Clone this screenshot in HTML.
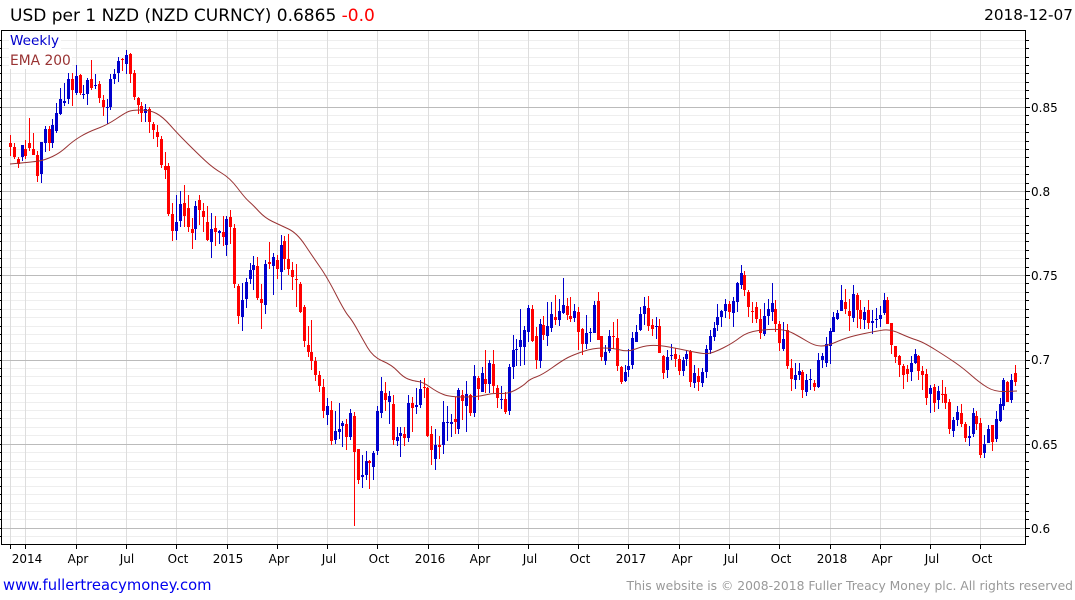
<!DOCTYPE html>
<html><head><meta charset="utf-8"><style>
html,body{margin:0;padding:0;background:#fff;width:1075px;height:600px;overflow:hidden}
svg{display:block}
text{font-family:"DejaVu Sans",sans-serif}
</style></head><body>
<svg width="1075" height="600" viewBox="0 0 1075 600" xmlns="http://www.w3.org/2000/svg">
<rect width="1075" height="600" fill="#fff"/>
<g shape-rendering="crispEdges" fill="none">
<path stroke="#eee" d="M1 40.5H1025M1 48.5H1025M1 57.5H1025M1 65.5H1025M1 73.5H1025M1 82.5H1025M1 90.5H1025M1 98.5H1025M1 115.5H1025M1 124.5H1025M1 132.5H1025M1 141.5H1025M1 149.5H1025M1 157.5H1025M1 166.5H1025M1 174.5H1025M1 183.5H1025M1 199.5H1025M1 208.5H1025M1 216.5H1025M1 225.5H1025M1 233.5H1025M1 241.5H1025M1 250.5H1025M1 258.5H1025M1 267.5H1025M1 283.5H1025M1 292.5H1025M1 300.5H1025M1 309.5H1025M1 317.5H1025M1 326.5H1025M1 334.5H1025M1 343.5H1025M1 351.5H1025M1 368.5H1025M1 376.5H1025M1 385.5H1025M1 393.5H1025M1 402.5H1025M1 410.5H1025M1 418.5H1025M1 427.5H1025M1 435.5H1025M1 452.5H1025M1 461.5H1025M1 469.5H1025M1 477.5H1025M1 486.5H1025M1 494.5H1025M1 503.5H1025M1 511.5H1025M1 519.5H1025M1 536.5H1025"/>
<path stroke="#ddd" d="M10.5 30V544M25.5 30V544M76.5 30V544M126.5 30V544M176.5 30V544M227.5 30V544M277.5 30V544M327.5 30V544M377.5 30V544M428.5 30V544M478.5 30V544M528.5 30V544M578.5 30V544M628.5 30V544M679.5 30V544M729.5 30V544M779.5 30V544M830.5 30V544M880.5 30V544M930.5 30V544M980.5 30V544"/>
<path stroke="#bbb" d="M1 107.5H1025M1 191.5H1025M1 275.5H1025M1 360.5H1025M1 444.5H1025M1 528.5H1025"/>
<rect x="9" y="31" width="52" height="19" fill="#fff"/>
<rect x="9" y="50" width="63" height="19" fill="#fff"/>
<path stroke="#ff0000" d="M10.5 135V156M14.5 143V159M18.5 157V168M25.5 140V159M29.5 118V151M33.5 133V155M37.5 151V182M49.5 126V151M72.5 73V106M80.5 74V95M91.5 60V90M99.5 81V103M103.5 95V116M122.5 58V71M130.5 53V83M134.5 70V100M138.5 97V114M141.5 102V122M149.5 107V133M153.5 122V139M157.5 125V147M161.5 136V168M165.5 152V179M168.5 163V216M172.5 203V241M184.5 185V227M188.5 195V232M192.5 218V249M199.5 195V225M203.5 203V232M207.5 206V241M215.5 216V246M223.5 216V246M230.5 210V244M234.5 224V288M238.5 284V324M257.5 257V300M261.5 284V329M269.5 242V269M277.5 255V279M284.5 236V270M288.5 234V275M292.5 262V290M296.5 264V307M300.5 282V313M304.5 305V347M308.5 326V357M311.5 320V370M315.5 357V381M319.5 371V392M323.5 379V418M331.5 401V445M346.5 419V450M354.5 412V526M358.5 449V484M369.5 460V489M385.5 382V411M393.5 395V445M404.5 427V446M412.5 397V432M424.5 378V398M427.5 387V437M431.5 426V465M439.5 436V459M455.5 397V434M462.5 390V420M470.5 394V416M478.5 376V400M485.5 350V393M493.5 350V393M497.5 385V408M505.5 392V414M532.5 305V342M536.5 327V369M543.5 316V340M555.5 295V325M567.5 298V320M570.5 297V322M578.5 307V350M582.5 328V355M598.5 292V340M601.5 336V361M613.5 322V349M617.5 319V371M621.5 366V384M648.5 296V331M652.5 319V336M659.5 319V353M663.5 355V379M675.5 348V367M679.5 355V375M690.5 350V387M698.5 368V391M729.5 301V319M744.5 271V296M748.5 290V317M752.5 302V323M756.5 302V323M760.5 309V339M775.5 300V332M779.5 321V351M787.5 324V369M791.5 359V391M802.5 370V398M814.5 380V391M845.5 289V314M849.5 299V331M857.5 293V328M860.5 300V329M868.5 300V329M887.5 297V324M891.5 323V354M895.5 346V363M899.5 355V377M903.5 364V389M907.5 365V382M918.5 355V380M922.5 366V390M926.5 369V405M934.5 384V412M942.5 380V403M945.5 387V409M949.5 399V434M961.5 404V427M965.5 422V442M976.5 411V430M980.5 418V458M992.5 425V451M1007.5 381V402M1015.5 365V386"/>
<path stroke="#ff0000" stroke-width="3" d="M10.5 143V147M14.5 147V157M18.5 159V164M25.5 149V156M29.5 143V148M33.5 149V155M37.5 155V176M49.5 129V143M72.5 79V90M80.5 75V93M91.5 79V88M99.5 84V98M103.5 100V107M122.5 59V60M130.5 54V74M134.5 73V97M138.5 98V105M141.5 106V113M149.5 109V122M153.5 124V130M157.5 132V137M161.5 139V165M165.5 166V170M168.5 166V214M172.5 214V231M184.5 203V216M188.5 208V227M192.5 229V233M199.5 200V210M203.5 211V217M207.5 222V240M215.5 228V232M223.5 232V237M230.5 217V227M234.5 228V284M238.5 286V316M257.5 266V298M261.5 299V303M269.5 262V264M277.5 260V269M284.5 241V259M288.5 259V269M292.5 270V277M296.5 279V280M300.5 284V312M304.5 307V341M308.5 345V352M311.5 352V361M315.5 361V375M319.5 375V386M323.5 387V411M331.5 410V441M346.5 424V437M354.5 416V452M358.5 449V480M369.5 461V463M385.5 393V400M393.5 404V440M404.5 434V438M412.5 403V408M424.5 387V388M427.5 388V436M431.5 434V450M439.5 445V447M455.5 419V422M462.5 395V401M470.5 395V413M478.5 378V389M485.5 379V384M493.5 364V386M497.5 388V398M505.5 399V412M532.5 309V341M536.5 336V360M543.5 325V335M555.5 317V320M567.5 306V315M570.5 316V319M578.5 312V332M582.5 329V344M598.5 301V340M601.5 336V357M613.5 336V337M617.5 338V366M621.5 367V382M648.5 308V326M652.5 325V329M659.5 326V353M663.5 356V373M675.5 354V359M679.5 359V371M690.5 351V382M698.5 376V382M729.5 304V312M744.5 275V290M748.5 292V307M752.5 311V312M756.5 307V319M760.5 319V333M775.5 309V324M779.5 324V343M787.5 330V366M791.5 368V379M802.5 372V390M814.5 383V387M845.5 302V309M849.5 311V316M857.5 295V310M860.5 310V319M868.5 310V323M887.5 300V324M891.5 323V345M895.5 346V357M899.5 356V365M903.5 366V375M907.5 369V374M918.5 356V371M922.5 371V375M926.5 374V398M934.5 387V403M942.5 394V395M945.5 394V403M949.5 402V429M961.5 413V424M965.5 424V438M976.5 416V424M980.5 423V455M992.5 425V442M1007.5 382V402M1015.5 373V382"/>
<path stroke="#0000cc" d="M22.5 145V161M41.5 142V183M45.5 126V152M52.5 119V148M56.5 103V133M60.5 88V115M64.5 83V106M68.5 73V104M76.5 65V95M83.5 85V99M87.5 78V105M95.5 74V89M107.5 99V124M110.5 74V110M114.5 69V84M118.5 57V82M126.5 50V74M145.5 104V122M176.5 195V240M180.5 191V227M195.5 201V240M211.5 213V258M219.5 230V244M226.5 216V256M242.5 283V331M246.5 278V308M250.5 263V284M253.5 256V290M265.5 260V314M273.5 253V295M281.5 235V290M327.5 398V425M335.5 411V444M339.5 403V439M342.5 421V447M350.5 409V440M362.5 455V488M366.5 451V480M373.5 451V480M377.5 406V455M381.5 377V418M389.5 391V424M397.5 427V446M400.5 427V457M408.5 395V442M416.5 388V414M420.5 380V408M435.5 429V470M443.5 401V454M447.5 406V441M451.5 414V437M458.5 388V434M466.5 381V432M474.5 365V417M482.5 367V392M489.5 360V393M501.5 386V409M509.5 364V415M513.5 335V379M516.5 339V366M520.5 309V366M524.5 326V365M528.5 305V342M540.5 319V368M547.5 302V346M551.5 302V332M559.5 299V326M563.5 278V314M574.5 304V322M586.5 315V349M590.5 328V342M594.5 301V333M605.5 345V365M609.5 330V353M625.5 365V382M628.5 349V377M632.5 332V369M636.5 325V342M640.5 307V331M644.5 297V325M656.5 317V339M667.5 350V378M671.5 344V360M683.5 357V376M686.5 350V366M694.5 365V388M702.5 368V387M706.5 345V378M710.5 330V354M714.5 322V341M717.5 304V331M721.5 310V327M725.5 299V318M733.5 297V327M737.5 282V312M741.5 265V289M764.5 303V336M768.5 299V325M772.5 283V321M783.5 322V351M795.5 363V389M799.5 363V380M806.5 374V396M810.5 369V390M818.5 353V388M822.5 353V368M826.5 337V367M830.5 328V364M833.5 312V332M837.5 310V320M841.5 285V311M853.5 285V322M864.5 307V329M872.5 310V334M876.5 308V328M880.5 306V327M884.5 293V315M911.5 356V381M915.5 349V364M930.5 385V413M938.5 386V409M953.5 417V437M957.5 406V426M969.5 426V446M973.5 408V437M984.5 435V458M988.5 425V443M996.5 411V442M1000.5 398V422M1003.5 378V410M1011.5 374V403"/>
<path stroke="#0000cc" stroke-width="3" d="M22.5 145V157M41.5 142V174M45.5 129V143M52.5 125V143M56.5 113V131M60.5 99V114M64.5 101V103M68.5 79V99M76.5 76V93M83.5 94V95M87.5 80V94M95.5 85V86M107.5 107V108M110.5 79V107M114.5 74V79M118.5 61V73M126.5 55V64M145.5 109V113M176.5 222V231M180.5 204V221M195.5 206V229M211.5 229V242M219.5 231V233M226.5 219V245M242.5 300V317M246.5 282V299M250.5 270V279M253.5 265V270M265.5 264V305M273.5 257V266M281.5 245V272M327.5 406V415M335.5 431V440M339.5 429V432M342.5 423V426M350.5 413V437M362.5 475V477M366.5 461V475M373.5 453V467M377.5 411V451M381.5 391V413M389.5 396V402M397.5 437V441M400.5 433V436M408.5 403V438M416.5 405V407M420.5 389V405M435.5 445V459M443.5 422V445M447.5 422V423M451.5 422V424M458.5 390V429M466.5 394V406M474.5 376V413M482.5 373V392M489.5 363V384M501.5 399V400M509.5 367V411M513.5 350V367M516.5 349V350M520.5 340V347M524.5 330V347M528.5 308V332M540.5 324V361M547.5 326V336M551.5 314V328M559.5 311V320M563.5 305V313M574.5 311V318M586.5 333V344M590.5 332V333M594.5 305V333M605.5 352V361M609.5 336V351M625.5 372V381M628.5 366V370M632.5 338V365M636.5 332V342M640.5 314V330M644.5 306V314M656.5 326V327M667.5 357V370M671.5 355V356M683.5 360V371M686.5 354V359M694.5 373V383M702.5 372V383M706.5 349V372M710.5 336V350M714.5 328V337M717.5 317V325M721.5 311V317M725.5 304V311M733.5 301V313M737.5 283V302M741.5 273V285M764.5 316V334M768.5 309V316M772.5 303V312M783.5 339V349M795.5 375V380M799.5 371V375M806.5 380V392M810.5 379V380M818.5 360V387M822.5 356V360M826.5 344V363M830.5 331V346M833.5 317V332M837.5 313V319M841.5 300V311M853.5 294V318M864.5 312V320M872.5 321V323M876.5 319V320M880.5 315V319M884.5 300V313M911.5 363V372M915.5 354V363M930.5 388V394M938.5 391V400M953.5 420V431M957.5 412V420M969.5 436V438M973.5 413V434M984.5 444V453M988.5 429V443M996.5 419V439M1000.5 404V421M1003.5 380V406M1011.5 380V400"/>
</g>
<path fill="none" stroke="#993333" stroke-width="1" d="M10 164 Q33 162 39 161 Q45 160 52.5 156.5 Q60 153 66.5 147 Q73 141 80.5 136.5 Q88 132 97.5 128.5 Q107 125 116 119 Q125 113 128.5 111.5 Q132 110 141 110 Q150 110 156.5 113.5 Q163 117 170 125 Q177 133 187 143 Q197 153 205 160.5 Q213 168 221.5 173 Q230 178 237.5 188 Q245 198 249 201.5 Q253 205 259 211.5 Q265 218 272.5 221.5 Q280 225 288.5 229 Q297 233 305 245 Q313 257 320 267 Q327 277 336 294.5 Q345 312 348.5 316 Q352 320 357 329 Q362 338 367.5 347.5 Q373 357 382.5 361 Q392 365 397.5 371 Q403 377 408 379 Q413 381 418 381.5 Q423 382 430 387 Q437 392 443.5 394.5 Q450 397 463.5 397 Q477 397 485 395 Q493 393 500.5 393.5 Q508 394 515.5 390 Q523 386 526.5 382.5 Q530 379 536 377 Q542 375 552.5 367.5 Q563 360 568 357.5 Q573 355 583 351.5 Q593 348 603 348 Q613 348 620.5 350 Q628 352 635.5 349 Q643 346 650.5 345.5 Q658 345 669 347 Q680 349 691.5 351.5 Q703 354 708 353.5 Q713 353 723 348 Q733 343 740 337.5 Q747 332 758.5 330.5 Q770 329 778.5 329.5 Q787 330 793.5 333.5 Q800 337 807.5 341.5 Q815 346 821 346 Q827 346 835 342.5 Q843 339 850 337 Q857 335 867 333 Q877 331 883.5 330 Q890 329 900 333.5 Q910 338 916.5 340 Q923 342 935 349.5 Q947 357 955 362.5 Q963 368 971.5 375.5 Q980 383 987.5 387.5 Q995 392 1006 391.5 L1017 391"/>
<g shape-rendering="crispEdges" fill="none" stroke="#000">
<path d="M1.5 30V544.5H1025.5V30M1 30.5H1026"/>
<path d="M1026 40.5h3M1026 48.5h3M1026 57.5h3M1026 65.5h3M1026 73.5h3M1026 82.5h3M1026 90.5h3M1026 98.5h3M1026 107.5h4M1026 115.5h3M1026 124.5h3M1026 132.5h3M1026 141.5h3M1026 149.5h3M1026 157.5h3M1026 166.5h3M1026 174.5h3M1026 183.5h3M1026 191.5h4M1026 199.5h3M1026 208.5h3M1026 216.5h3M1026 225.5h3M1026 233.5h3M1026 241.5h3M1026 250.5h3M1026 258.5h3M1026 267.5h3M1026 275.5h4M1026 283.5h3M1026 292.5h3M1026 300.5h3M1026 309.5h3M1026 317.5h3M1026 326.5h3M1026 334.5h3M1026 343.5h3M1026 351.5h3M1026 360.5h4M1026 368.5h3M1026 376.5h3M1026 385.5h3M1026 393.5h3M1026 402.5h3M1026 410.5h3M1026 418.5h3M1026 427.5h3M1026 435.5h3M1026 444.5h4M1026 452.5h3M1026 461.5h3M1026 469.5h3M1026 477.5h3M1026 486.5h3M1026 494.5h3M1026 503.5h3M1026 511.5h3M1026 519.5h3M1026 528.5h4M1026 536.5h3"/>
<path d="M0 40.5h1M0 48.5h1M0 57.5h1M0 65.5h1M0 73.5h1M0 82.5h1M0 90.5h1M0 98.5h1M0 107.5h1M0 115.5h1M0 124.5h1M0 132.5h1M0 141.5h1M0 149.5h1M0 157.5h1M0 166.5h1M0 174.5h1M0 183.5h1M0 191.5h1M0 199.5h1M0 208.5h1M0 216.5h1M0 225.5h1M0 233.5h1M0 241.5h1M0 250.5h1M0 258.5h1M0 267.5h1M0 275.5h1M0 283.5h1M0 292.5h1M0 300.5h1M0 309.5h1M0 317.5h1M0 326.5h1M0 334.5h1M0 343.5h1M0 351.5h1M0 360.5h1M0 368.5h1M0 376.5h1M0 385.5h1M0 393.5h1M0 402.5h1M0 410.5h1M0 418.5h1M0 427.5h1M0 435.5h1M0 444.5h1M0 452.5h1M0 461.5h1M0 469.5h1M0 477.5h1M0 486.5h1M0 494.5h1M0 503.5h1M0 511.5h1M0 519.5h1M0 528.5h1M0 536.5h1"/>
<path d="M10.5 545v4M25.5 545v4M76.5 545v4M126.5 545v4M176.5 545v4M227.5 545v4M277.5 545v4M327.5 545v4M377.5 545v4M428.5 545v4M478.5 545v4M528.5 545v4M578.5 545v4M628.5 545v4M679.5 545v4M729.5 545v4M779.5 545v4M830.5 545v4M880.5 545v4M930.5 545v4M980.5 545v4"/>
</g>
<text x="10" y="21" font-size="17" fill="#000">USD per 1 NZD (NZD CURNCY) 0.6865 <tspan fill="#ff0000">-0.0</tspan></text>
<text x="1073" y="20" font-size="15.3" fill="#000" text-anchor="end">2018-12-07</text>
<text x="10" y="45" font-size="13.6" fill="#0000cc">Weekly</text>
<text x="10" y="65" font-size="13.8" fill="#993333">EMA 200</text>
<g font-size="12" fill="#000">
<text x="1031" y="112">0.85</text><text x="1031" y="196">0.8</text><text x="1031" y="280">0.75</text><text x="1031" y="364">0.7</text><text x="1031" y="449">0.65</text><text x="1031" y="533">0.6</text>
</g>
<g font-size="12" fill="#000" text-anchor="middle">
<text x="27" y="563">2014</text><text x="78" y="563">Apr</text><text x="127" y="563">Jul</text><text x="178" y="563">Oct</text><text x="228" y="563">2015</text><text x="279" y="563">Apr</text><text x="329" y="563">Jul</text><text x="379" y="563">Oct</text><text x="430" y="563">2016</text><text x="480" y="563">Apr</text><text x="530" y="563">Jul</text><text x="580" y="563">Oct</text><text x="631" y="563">2017</text><text x="682" y="563">Apr</text><text x="731" y="563">Jul</text><text x="781" y="563">Oct</text><text x="832" y="563">2018</text><text x="882" y="563">Apr</text><text x="932" y="563">Jul</text><text x="982" y="563">Oct</text>
</g>
<text x="3" y="590" font-size="14.75" fill="#0000ee">www.fullertreacymoney.com</text>
<text x="1073" y="590" font-size="12.34" fill="#999" text-anchor="end">This website is © 2008-2018 Fuller Treacy Money plc. All rights reserved</text>
</svg>
</body></html>
